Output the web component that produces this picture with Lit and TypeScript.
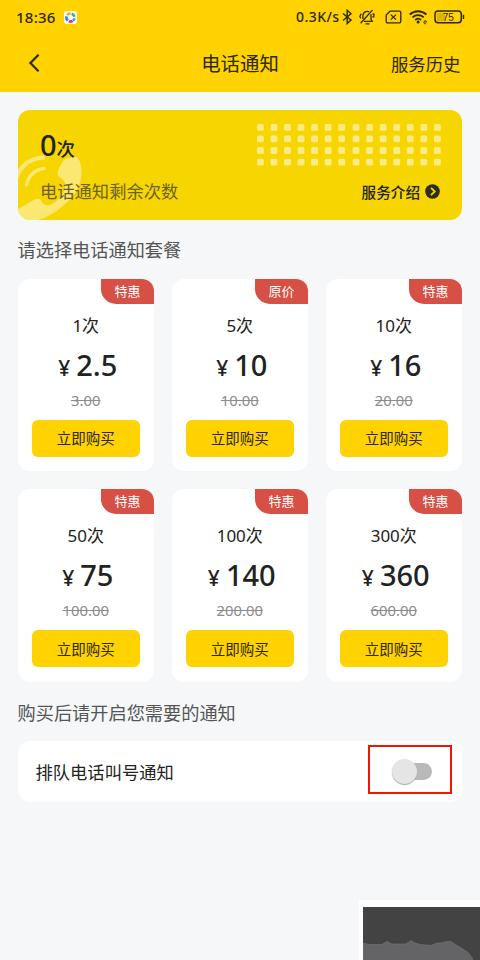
import { LitElement, html, css, svg } from "lit";
import { customElement, property, state } from "lit/decorators.js";
import { classMap } from "lit/directives/class-map.js";

interface Plan {
  count: number;
  price: string;
  was: string;
  tag: string;
}

const PLANS: Plan[] = [
  { count: 1, price: "2.5", was: "3.00", tag: "特惠" },
  { count: 5, price: "10", was: "10.00", tag: "原价" },
  { count: 10, price: "16", was: "20.00", tag: "特惠" },
  { count: 50, price: "75", was: "100.00", tag: "特惠" },
  { count: 100, price: "140", was: "200.00", tag: "特惠" },
  { count: 300, price: "360", was: "600.00", tag: "特惠" },
];

@customElement("status-bar")
class StatusBar extends LitElement {
  static styles = css`
    :host {
      display: flex;
      align-items: center;
      height: 34px;
      padding: 0 15px 0 16px;
      color: #2d2808;
      font: 500 15px/34px "Noto Sans", sans-serif;
    }
    .time { width: 40px; letter-spacing: 0.25px; white-space: nowrap; }
    .app { width: 13px; height: 13px; margin-left: 8px; }
    .speed { margin-left: auto; width: 45px; font-size: 14px; letter-spacing: 0.45px; white-space: nowrap; }
    svg { display: block; flex: none; }
    .bt { margin-left: 1px; }
    .bell { margin-left: 6px; }
    .sim { margin-left: 10px; }
    .wifi { margin-left: 7px; }
    .battery { margin-left: 6px; }
    .level { font: 400 10px "Liberation Sans", sans-serif; }
  `;
  render() {
    return html`
      <span class="time">18:36</span>
      <svg class="app" viewBox="0 0 13 13">
        <rect width="13" height="13" rx="3" fill="#fff" />
        <g fill="none" stroke-width="2.6">
          <path d="M3.1 4.2A4 4 0 0 1 6.6 2.5" stroke="#f5a623" />
          <path d="M7.6 2.7A4 4 0 0 1 10.4 5.8" stroke="#35b36b" />
          <path d="M10.4 7.2A4 4 0 0 1 9 9.7" stroke="#28a7c9" />
          <path d="M8.6 10A4 4 0 0 1 4.8 10.1" stroke="#e5334b" />
          <path d="M3.9 9.6A4 4 0 0 1 2.6 5.4" stroke="#2587e8" />
        </g>
      </svg>
      <span class="speed">0.3K/s</span>
      <svg class="bt" width="11" height="16" viewBox="0 0 11 16" fill="none" stroke="currentColor" stroke-width="1.4">
        <path d="M1 4.5 9 11 5.2 14.5V1.3L9 4.8 1 11.5" />
      </svg>
      <svg class="bell" width="16" height="16" viewBox="0 0 16 16" fill="none" stroke="currentColor" stroke-width="1.3" stroke-linecap="round">
        <path d="M13.2 1.4 2 13.8M3.9 9.4V6.6A4.2 4.2 0 0 1 9.6 2.7M12 5.6V10l1.2 2.4H5.5M7 14.8h3M1.9 5.2.9 7.6l.6 1.2M14 5l1 .2-.2 2.6h-1" />
      </svg>
      <svg class="sim" width="17" height="14" viewBox="0 0 17 14" fill="none" stroke="currentColor" stroke-width="1.3">
        <path d="M5 1.2h9.5a1.3 1.3 0 0 1 1.3 1.3v9a1.3 1.3 0 0 1-1.3 1.3h-12a1.3 1.3 0 0 1-1.3-1.3V5z" />
        <path d="m5.8 4.6 5.2 5M11 4.6l-5.2 5" />
      </svg>
      <svg class="wifi" width="19" height="16" viewBox="0 0 19 16" fill="none" stroke="currentColor" stroke-width="1.8">
        <path d="M.8 5.5a12.2 12.2 0 0 1 16.6 0M3.5 8.3a8.2 8.2 0 0 1 11.2 0M6.2 11a4.3 4.3 0 0 1 5.8 0" />
        <circle cx="9.1" cy="13" r="1.5" fill="currentColor" stroke="none" />
        <path d="M14.8 13h2.8c0-1.8-2.8-1.6-2.8.3 0 1.600 1.400 1.700 2.400 1.200" stroke-width=".8" />
      </svg>
      <svg class="battery" width="31" height="14" viewBox="0 0 31 14">
        <rect x="3" y="2.8" width="8" height="8.4" fill="#dfb400" />
        <rect x="1" y="1" width="26.3" height="11.8" rx="3.2" fill="none" stroke="currentColor" stroke-width="1.5" />
        <path d="M29.5 4.8v4.2" stroke="currentColor" stroke-width="1.4" />
        <text class="level" x="14.2" y="10.500" text-anchor="middle" fill="currentColor">75</text>
      </svg>
    `;
  }
}

@customElement("plan-card")
class PlanCard extends LitElement {
  @property({ attribute: false }) plan!: Plan;

  static styles = css`
    :host {
      position: relative;
      display: flex;
      flex-direction: column;
      align-items: center;
      height: 192.5px;
      box-sizing: border-box;
      padding-top: 34px;
      border-radius: 12px;
      background: #fff;
      font-family: "Noto Sans", "Noto Sans CJK SC", sans-serif;
      color: #222;
    }
    .tag {
      position: absolute;
      top: 0;
      right: 0;
      width: 53px;
      height: 25px;
      border-radius: 0 12px 0 15px;
      background: #d65045;
      color: #fff;
      font: 400 13px/24px "Noto Sans CJK SC", sans-serif;
      text-align: center;
    }
    .count { height: 26px; font-size: 17px; line-height: 26px; }
    .price { height: 38px; margin-top: 7px; padding-left: 4px; font-size: 29px; font-weight: 500; line-height: 38px; white-space: nowrap; }
    .yen { font-size: 21px; margin-right: 6px; }
    .was { height: 20px; margin-top: 7px; font-size: 14.8px; line-height: 19px; color: #8c8c8c; text-decoration: line-through; }
    .buy {
      width: 107.5px;
      height: 37px;
      margin-top: 9px;
      padding: 0;
      border: 0;
      border-radius: 6px;
      background: #ffd200;
      color: #2d2808;
      font: 400 14.5px/36px "Noto Sans CJK SC", sans-serif;
    }
  `;
  render() {
    const { count, price, was, tag } = this.plan;
    return html`
      <div class="tag">${tag}</div>
      <div class="count">${count}次</div>
      <div class="price"><span class="yen">¥</span>${price}</div>
      <div class="was">${was}</div>
      <button class="buy">立即购买</button>
    `;
  }
}

@customElement("app-root")
class AppRoot extends LitElement {
  @state() private queueCall = false;

  static styles = css`
    :host {
      position: relative;
      display: block;
      height: 960px;
      overflow: hidden;
      background: #f5f7f8;
      font-family: "Noto Sans CJK SC", sans-serif;
      color: #222;
    }
    .top { height: 92px; background: #ffd200; color: #2d2808; }
    .nav { display: grid; grid-template-columns: 1fr auto 1fr; align-items: center; height: 58px; padding: 0 19.5px; }
    .nav svg { display: block; margin-left: 7.5px; }
    .title { font-size: 19.4px; line-height: 58px; }
    .history { justify-self: end; font-size: 17.4px; }
    main { padding: 18px 18px 0 17.5px; }
    .banner {
      position: relative;
      height: 109.5px;
      box-sizing: border-box;
      padding: 17px 22px 0 22.5px;
      border-radius: 12px;
      overflow: hidden;
      background: #f7d500;
    }
    .phone { position: absolute; left: 0; bottom: 0; }
    .dots { position: absolute; right: 20px; top: 14px; }
    .left { position: relative; height: 36px; line-height: 36px; font-size: 18.5px; font-weight: 500; white-space: nowrap; }
    .zero { font: 500 29px/36px "Noto Sans", sans-serif; }
    .row { position: relative; display: flex; justify-content: space-between; align-items: center; height: 26px; margin-top: 15px; }
    .remain { font-size: 17.3px; line-height: 26px; color: #6c6220; }
    .intro { display: flex; align-items: center; gap: 5px; font-size: 14.6px; font-weight: 500; }
    h2 { margin: 0; font-size: 18.2px; font-weight: 400; line-height: 28px; color: #555; }
    .choose { margin-top: 15.5px; }
    .plans { display: grid; grid-template-columns: repeat(3, 1fr); gap: 18px 17.5px; margin-top: 15.5px; }
    .enable { margin-top: 16px; }
    .setting { display: flex; align-items: center; justify-content: space-between; height: 60.5px; margin-top: 15.5px; padding: 0 10px 0 18px; border-radius: 12px; background: #fff; font-size: 17.3px; }
    .frame { display: flex; align-items: center; width: 84px; height: 49px; margin-top: -4px; border: 2px solid #f51308; padding-left: 22px; box-sizing: border-box; }
    .switch { position: relative; width: 40px; height: 26px; margin-top: 5px; padding: 0; border: 0; background: none; }
    .track { position: absolute; left: 6px; top: 4px; width: 34px; height: 17px; border-radius: 9px; background: #b9b9b9; }
    .knob { position: absolute; left: 0; top: 0; width: 25px; height: 25px; border-radius: 50%; background: #e5e5e5; box-shadow: 0 1px 1px #aaa; }
    .on .knob { left: 15px; background: #ffd200; }
    .corner { position: absolute; right: 0; bottom: 0; width: 117px; height: 53px; border: solid #fff; border-width: 7px 0 0 4px; background: #434344; }
    .corner svg { display: block; }
  `;

  private dots() {
    const cells = [];
    for (let r = 0; r < 4; r++)
      for (let c = 0; c < 14; c++)
        cells.push(svg`<rect x=${c * 13.55 + (c > 6 ? 0.8 : 0)} y=${r * 11.55} width="6.8" height="6.8" rx="1.5" />`);
    return cells;
  }

  render() {
    return html`
      <header class="top">
        <status-bar></status-bar>
        <nav class="nav">
          <svg width="14" height="20" viewBox="0 0 14 20" fill="none" stroke="currentColor" stroke-width="2.2">
            <path d="M11.6 1.8 3.4 10l8.2 8.2" />
          </svg>
          <span class="title">电话通知</span>
          <span class="history">服务历史</span>
        </nav>
      </header>
      <main>
        <section class="banner">
          <svg class="phone" width="66" height="66" viewBox="0 0 66 66" fill="#fff" fill-opacity=".45">
            <path d="M40 17C42 12 44 8 47 5L57 2.500Q61 3 62.500 10C67 24 59 40 46 51Q34 62 20 66H0V55L13 47.500Q19 43.500 22 45L25 49.500Q29 53 34 50C41 46 46 40 47 34Q48 28 45 25.500L41 22.500Q39 20.500 40 17z" />
            <path d="M0 25V16C5 7 14 1.500 27 1.500V5.500C14 6 5 12 0 25z" />
            <path d="M8.500 31C10 22 17 15.500 26 14.500" fill="none" stroke="#fff" stroke-opacity=".45" stroke-width="3.500" stroke-linecap="round" />
          </svg>
          <svg class="dots" width="185" height="42" viewBox="0 0 185 42" fill="#fff" fill-opacity=".53">${this.dots()}</svg>
          <div class="left"><span class="zero">0</span>次</div>
          <div class="row">
            <span class="remain">电话通知剩余次数</span>
            <span class="intro">服务介绍
              <svg width="15" height="15" viewBox="0 0 15 15">
                <circle cx="7.5" cy="7.5" r="7.3" fill="#2d2c25" />
                <path d="m6 3.8 3.8 3.7L6 11.2" fill="none" stroke="#f7d500" stroke-width="1.8" />
              </svg>
            </span>
          </div>
        </section>
        <h2 class="choose">请选择电话通知套餐</h2>
        <section class="plans">${PLANS.map((p) => html`<plan-card .plan=${p}></plan-card>`)}</section>
        <h2 class="enable">购买后请开启您需要的通知</h2>
        <section class="setting">
          <span>排队电话叫号通知</span>
          <div class="frame">
            <button
              class=${classMap({ switch: true, on: this.queueCall })}
              role="switch"
              aria-checked=${this.queueCall}
              @click=${() => (this.queueCall = !this.queueCall)}
            ><span class="track"></span><span class="knob"></span></button>
          </div>
        </section>
      </main>
      <div class="corner">
        <svg width="117" height="53" viewBox="0 0 117 53">
          <path d="M0 36l6 1.500h13l5-3 5 2.500h14l5-3.500 4 2.500 5 1.500 11 1 6-2.500 5 0 4-1.500h5l6 4 5 3 6 4 4 5 1 3H0z" fill="#646466" stroke="#777" stroke-width=".6" />
        </svg>
      </div>
    `;
  }
}
